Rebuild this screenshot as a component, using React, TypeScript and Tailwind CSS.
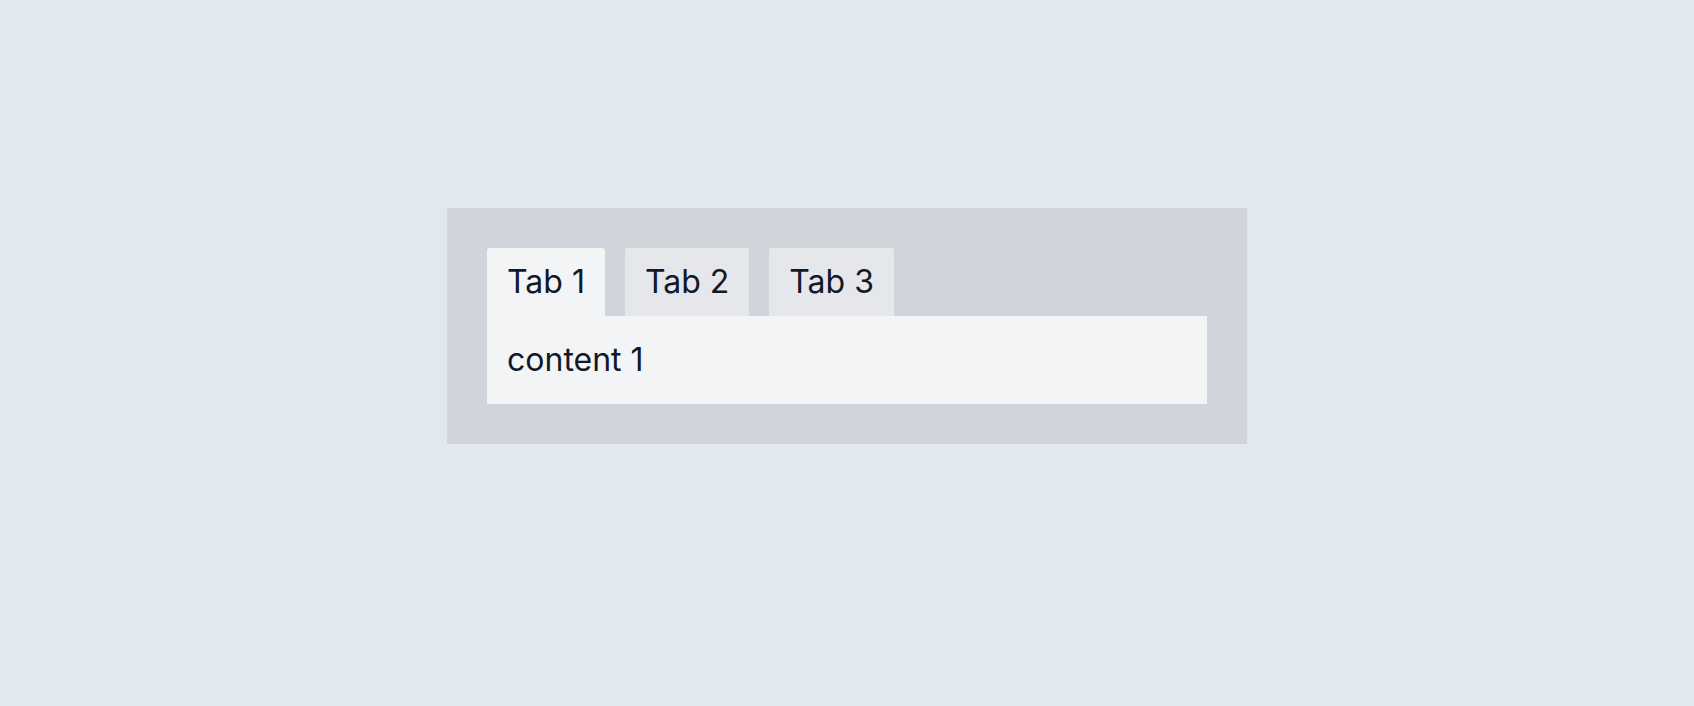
import { useState } from 'react';

const tabs = [
  { id: 1, label: 'Tab 1', content: 'content 1' },
  { id: 2, label: 'Tab 2', content: 'content 2' },
  { id: 3, label: 'Tab 3', content: 'content 3' },
];

const App = () => {
  const [activeTab, setActiveTab] = useState(1);
  const current = tabs.find((tab) => tab.id === activeTab);

  return (
    <main className="flex h-[706px] w-full justify-center bg-[#e2e8f0] pt-[208px] font-['Inter',sans-serif] text-[#111827]">
      <div className="flex h-fit w-[800px] flex-col bg-[#d1d5db] p-10">
        <div className="flex gap-5">
          {tabs.map((tab) => (
            <button
              key={tab.id}
              onClick={() => setActiveTab(tab.id)}
              className={`rounded-t-[3px] px-5 py-2.5 text-[32px] leading-[48px] ${
                tab.id === activeTab ? 'bg-[#f3f4f6]' : 'bg-[#e5e7eb]'
              }`}>
              {tab.label}
            </button>
          ))}
        </div>
        <div className="bg-[#f3f4f6] p-5 text-[32px] leading-[48px]">{current?.content}</div>
      </div>
    </main>
  );
};

export default App;
